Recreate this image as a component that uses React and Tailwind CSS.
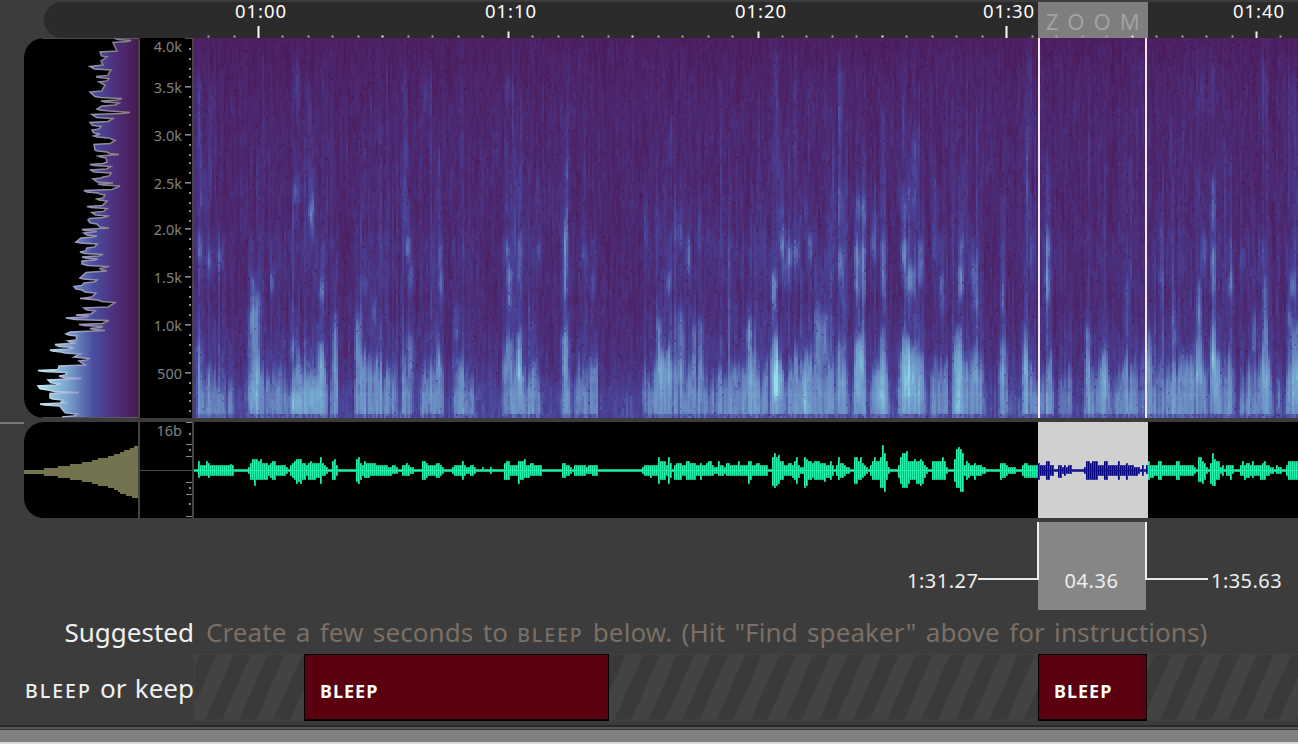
import React, { useEffect, useRef } from 'react';

/* ---------- waveform data: start x, extent above axis, extent below axis ---------- */
const WAVE = `194 1 1;198 9 7;200 5 5;206 9 5;208 7 7;210 5 5;230 6 5;232 5 5;234 1 1;248 3 3;250 7 9;252 11 9;254 11 15;256 11 9;258 9 9;260 11 9;262 7 9;268 5 5;270 7 7;272 9 9;276 5 5;286 3 3;288 1 1;
290 5 5;292 7 7;294 9 9;296 11 13;298 11 11;300 11 13;302 7 9;306 5 5;308 7 9;310 9 9;312 7 9;316 7 7;318 7 7;320 13 13;322 7 5;324 5 5;326 3 3;328 1 1;332 9 9;334 11 9;336 5 5;338 1 1;356 11 11;358 13 13;360 7 9;362 5 5;364 9 7;366 7 7;370 7 5;376 5 5;388 3 5;392 5 3;396 3 3;398 1 1;402 5 5;406 7 5;408 5 5;410 3 3;414 1 1;422 9 9;426 7 7;428 5 5;436 7 7;440 5 5;442 3 3;444 1 1;
452 3 3;454 5 5;462 9 9;464 5 5;466 3 3;470 5 5;474 3 3;476 1 1;482 3 1;484 1 1;490 3 3;492 1 1;504 7 9;506 9 9;510 5 5;518 9 13;520 9 9;524 11 7;526 5 7;530 7 5;534 5 5;542 1 1;562 7 7;566 5 5;570 3 3;572 1 1;574 5 5;586 3 3;588 5 3;592 5 5;598 1 1;642 3 3;644 5 5;650 5 7;652 5 5;658 13 13;660 9 9;666 5 5;668 13 13;670 7 7;672 1 1;674 5 9;676 7 9;682 5 5;686 9 9;690 7 9;696 5 5;700 7 9;702 5 5;706 7 5;708 9 5;712 5 5;714 3 3;
718 9 5;720 5 5;724 3 3;726 7 5;730 5 5;738 9 5;740 5 5;748 9 13;750 9 9;752 5 5;756 7 5;760 5 5;768 1 1;772 13 15;774 17 17;776 13 15;778 15 13;780 9 9;784 5 5;788 7 5;792 5 7;794 9 9;796 13 13;798 5 7;800 3 3;804 13 17;806 11 15;808 9 9;812 7 7;814 9 9;820 7 9;824 7 11;826 5 7;830 9 9;832 5 5;834 1 1;836 5 5;838 13 9;840 7 7;844 5 5;846 3 3;850 1 1;854 13 13;858 9 9;860 13 9;862 7 7;864 5 5;866 3 3;868 1 1;870 5 5;872 9 9;874 13 9;876 9 9;880 13 17;882 25 17;884 17 21;886 9 9;888 3 3;890 1 1;
898 5 7;900 13 13;902 17 17;906 19 17;908 9 13;910 9 9;914 11 9;916 9 13;920 11 15;922 9 13;924 5 7;926 3 3;928 1 1;932 9 9;942 13 9;944 9 9;946 3 3;948 1 1;954 11 11;956 21 17;958 23 17;960 21 21;962 17 21;964 5 5;966 9 9;968 7 7;970 5 5;974 7 9;976 5 5;982 3 3;986 1 1;1000 7 9;1002 7 7;1006 5 5;1008 3 3;1016 1 1;1022 5 5;1024 7 7;1028 5 7;1038 7 9;1040 5 5;1046 9 9;1050 5 5;1054 1 1;1058 5 7;1062 3 3;1064 5 5;1066 3 3;1068 5 3;1072 1 1;1084 3 3;1086 9 9;1090 7 9;1092 9 9;1098 5 5;1104 9 9;1108 5 5;1118 9 9;1120 5 5;1126 7 9;1128 5 5;1134 3 5;1138 3 3;1140 1 1;1142 5 5;1144 1 1;1146 5 3;
1148 9 9;1150 5 7;1154 5 5;1158 9 9;1162 5 5;1176 9 9;1180 5 5;1194 3 3;1196 1 1;1198 13 11;1202 9 13;1204 7 9;1206 3 3;1208 1 1;1210 7 13;1212 17 15;1214 11 15;1216 9 9;1220 3 3;1222 5 5;1224 1 1;1226 5 5;1230 5 9;1232 5 3;1234 1 1;1240 5 5;1242 9 5;1244 5 9;1246 7 7;1250 5 5;1252 9 7;1254 5 5;1260 5 9;1262 7 9;1264 9 9;1266 5 5;1270 3 3;1274 1 1;1276 5 3;1278 3 3;1282 1 1;1286 5 5;1288 9 9`
  .split(';').map((s) => s.trim().split(' ').map(Number));

function waveColumns() {
  const out = [];
  let k = 0;
  for (let x = 194; x < 1298; x += 2) {
    while (k + 1 < WAVE.length && WAVE[k + 1][0] <= x) k++;
    out.push({ x, u: WAVE[k][1], d: WAVE[k][2] });
  }
  return out;
}
const COLUMNS = waveColumns();

/* ---------- spectrogram: x, top, bottom, half width, strength ---------- */
const STREAKS = `199 225 265 2 .25;209 245 275 2 .28;220 245 270 2 .15;198 330 370 3 .2;253 270 330 2 .24;254 305 412 4 .3;258 290 315 3 .18;272 270 295 1.5 .28;310 200 225 2 .22;293 333 360 2 .22;322 275 305 2 .36;321 335 380 2.5 .3;335 310 380 2 .3;358 310 370 2 .36;365 275 292 1.5 .25;374 290 325 2 .22;408 232 262 1.5 .32;411 262 297 1.5 .28;410 330 375 3 .26;440 240 270 1.2 .2;441 265 300 2 .3;439 340 380 2 .32;457 300 345 2 .2;507 235 262 1.5 .28;509 260 310 1.5 .4;508 332 380 3 .36;519 230 290 1.5 .25;519 328 385 1.5 .42;565 228 300 1.5 .32;565 325 380 2 .42;584 240 265 2 .14;539 235 262 1.5 .2;
595 345 385 2 .22;593 265 302 1.5 .2;659 315 380 1.5 .3;662 350 395 1.5 .28;669 265 300 1.5 .32;669 340 390 2 .32;680 305 385 4 .24;681 225 250 3 .16;688 235 275 1.5 .3;694 320 380 1.5 .25;701 315 380 1.5 .26;749 315 350 1.5 .4;750 345 400 3 .2;774 270 308 1.8 .42;775 330 400 2 .4;779 360 400 3 .3;782 225 260 2 .28;785 255 292 2 .22;790 240 268 1.5 .28;796 238 266 1.5 .35;805 190 225 1.5 .2;810 225 265 1.5 .22;818 298 370 1.8 .3;824 305 365 3 .28;805 370 418 1.5 .3;841 245 280 2 .34;843 275 310 2 .18;841 340 395 3 .3;857 240 300 1.5 .34;863 240 300 1.5 .28;857 332 400 2 .3;862 332 375 2 .34;874 222 265 2 .26;883 230 300 1.5 .3;883 325 420 2 .3;878 365 410 4 .2;
904 238 270 2.5 .34;910 260 300 2.5 .34;914 262 302 1.5 .2;921 235 290 1.5 .25;908 336 400 6 .34;921 350 400 3 .24;942 268 315 2.5 .25;961 235 262 1.5 .25;961 260 302 1.8 .45;959 320 418 3 .34;973 255 285 2 .24;976 275 315 2.5 .26;975 340 385 4 .22;1002 285 320 1.5 .25;1003 335 385 3 .28;1025 320 380 1.5 .22;1047 262 305 1.5 .3;1048 232 262 2 .22;1031 235 270 1.5 .16;1087 320 390 2 .26;1127 275 340 1.5 .2;1105 340 400 2 .2;1149 325 380 2 .28;1161 265 380 1.5 .14;1161 210 290 1.5 .15;1174 305 350 2 .15;1199 275 330 1.5 .36;1199 330 390 3 .32;1204 230 270 1.5 .25;1213 240 300 1.5 .36;1213 320 370 1.5 .45;1216 345 400 3 .22;1231 265 300 1.5 .32;1243 245 270 1.5 .18;1265 275 350 1.5 .32;1265 340 395 2.5 .26;1263 235 270 1.5 .14;1254 305 360 1.5 .2;1293 270 300 2.5 .3;1289 300 330 1.5 .2;1296 320 400 4 .3;
199 70 215 2 .16;205 165 215 2 .12;211 80 200 1.5 .1;297 60 110 2 .2;297 175 205 3 .3;310 80 200 2 .12;312 190 240 1.5 .22;405 60 110 1.5 .18;406 130 230 1.5 .18;426 80 110 2 .12;438 150 240 1.5 .14;508 70 105 2 .18;507 130 220 1.5 .14;518 150 220 1.5 .12;539 170 220 1.5 .12;566 150 240 1.5 .18;646 195 250 1.5 .16;660 200 240 2 .16;678 205 240 3 .16;700 210 250 1.5 .15;710 225 245 2 .12;776 45 170 2.5 .16;781 160 230 4 .14;795 70 190 1.5 .1;841 60 150 2 .15;841 180 230 3 .18;858 190 225 3 .22;865 190 230 2 .18;876 205 230 2 .16;883 100 220 2 .12;904 60 160 1.5 .12;905 175 220 4 .2;914 130 225 2 .18;935 170 265 2 .18;962 150 240 2 .14;1003 190 300 1.5 .12;1029 50 240 1.5 .12;1140 50 80 1 .15;1201 70 110 3 .12;1213 55 110 1.5 .19;1213 170 235 1.5 .26;1199 90 125 1.5 .12;1199 160 220 2 .12;1263 55 115 1 .2;1290 70 220 2 .08;1295 70 220 2 .08;313 374 415 8 .22;297 390 415 6 .26`
  .split(';').map((s) => s.trim().split(' ').map(Number));

const STOPS = [
  [0, 72, 22, 78],
  [0.14, 76, 31, 96],
  [0.27, 75, 44, 118],
  [0.45, 73, 68, 154],
  [0.7, 103, 132, 190],
  [0.88, 120, 174, 210],
  [1, 148, 222, 234],
];

function colour(v) {
  const t = Math.max(0, Math.min(1, v));
  let i = 1;
  while (i < STOPS.length - 1 && STOPS[i][0] < t) i++;
  const a = STOPS[i - 1];
  const b = STOPS[i];
  const f = (t - a[0]) / (b[0] - a[0]);
  return [1, 2, 3].map((c) => a[c] + (b[c] - a[c]) * f);
}

function generator(seed) {
  let s = seed;
  return () => {
    s = (s + 0x6d2b79f5) | 0;
    let t = Math.imul(s ^ (s >>> 15), 1 | s);
    t = (t + Math.imul(t ^ (t >>> 7), 61 | t)) ^ t;
    return ((t ^ (t >>> 14)) >>> 0) / 4294967296;
  };
}

const smooth = (a, b, v) => {
  const t = Math.max(0, Math.min(1, (v - a) / (b - a)));
  return t * t * (3 - 2 * t);
};

const FLOOR = [[38, 0.15], [110, 0.22], [200, 0.23], [270, 0.23], [320, 0.25], [350, 0.28], [375, 0.33], [395, 0.42], [412, 0.44], [418, 0.42]];
function floorLevel(y) {
  for (let i = 1; i < FLOOR.length; i++) {
    if (y <= FLOOR[i][0]) {
      const [y0, a] = FLOOR[i - 1];
      const [y1, b] = FLOOR[i];
      return a + ((b - a) * (y - y0)) / (y1 - y0);
    }
  }
  return 0.42;
}

function paintSpectrogram(canvas) {
  const w = 552;
  const h = 190;
  const ctx = canvas.getContext('2d');
  const img = ctx.createImageData(w, h);
  const rnd = generator(71);
  let drift = 0;
  for (let i = 0; i < w; i++) {
    const x = 194 + i * 2;
    const amp = COLUMNS[i].u + COLUMNS[i].d;
    const near = COLUMNS[Math.max(0, i - 1)].u + COLUMNS[Math.min(w - 1, i + 1)].u;
    const a = (amp + near) / 2;
    const voiced = smooth(2, 10, a);
    const loud = smooth(10, 34, a);
    drift = drift * 0.6 + (rnd() - 0.5) * 0.8;
    const top = 368 - loud * 24 + drift * 28;
    const tone = (rnd() - 0.5) * 0.08 - drift * 0.07;
    const haze = rnd() * rnd() * 0.15 * (0.25 + voiced);
    const hazeTop = 50 + rnd() * 180;
    const mine = STREAKS.filter((s) => Math.abs(s[0] - x) < s[3] * 4 + 2);
    let n1 = 0;
    let n2 = 0;
    for (let j = 0; j < h; j++) {
      const y = 38 + j * 2;
      if (rnd() < 0.24) n1 = (rnd() - 0.5) * 0.1;
      n2 = n2 * 0.95 + (rnd() - 0.5) * 0.03;
      let v = floorLevel(y) + n1 + n2 + tone * 0.3;
      if (rnd() < 0.008) v -= 0.12;
      v += haze * smooth(hazeTop - 30, hazeTop + 40, y);
      v += voiced * 0.06 * smooth(280, 350, y);
      v += voiced * 0.05 * smooth(220, 245, y) * (1 - smooth(270, 300, y));
      const low = 1 - smooth(411, 415, y);
      const body = smooth(top - 16, top + 22, y) * (0.22 + 0.78 * low);
      const dip = 1 - 0.2 * smooth(378, 386, y) * (1 - smooth(388, 396, y));
      v += voiced * body * dip * (0.23 + loud * 0.05 + tone * 1.6) * (y > 395 ? 0.86 : 1);
      for (const s of mine) {
        const dx = (x + 1 - s[0]) / (s[3] + 0.5);
        const fall = Math.exp(-dx * dx * 0.65);
        const edge = Math.min(16, (s[2] - s[1]) / 2);
        v += s[4] * 0.75 * fall * smooth(s[1] - 6, s[1] + edge, y) * (1 - smooth(s[2] - edge, s[2] + 6, y));
        v += s[4] * 0.25 * fall * smooth(s[1] - 50, s[1], y) * (1 - smooth(s[2], s[2] + 40, y));
      }
      if (y > 412) v = Math.min(v, 0.56 + n1 * 2);
      if (v > 0.7) v = 0.7 + (v - 0.7) * 0.56;
      const c = colour(v);
      const p = (j * w + i) * 4;
      img.data[p] = c[0];
      img.data[p + 1] = c[1];
      img.data[p + 2] = c[2];
      img.data[p + 3] = 255;
    }
  }
  ctx.putImageData(img, 0, 0);
}

function Spectrogram() {
  const ref = useRef(null);
  useEffect(() => paintSpectrogram(ref.current), []);
  return <canvas ref={ref} width={552} height={190} className="block h-[380px] w-[1104px] [image-rendering:pixelated]" />;
}

/* ---------- average spectrum outline ---------- */
const PROFILE = `114,38 131,40.5 113,42.5 117,51 100,52 107,57 101,61 103,65 90,66.5 111,70 109,78.5 96,76.5 99,82 105,85 90,92 95,96.5 122,98.5 101,101 119,103 102,106 97,109 110,111 130,112.5 92,114.5 113,118.5 90,122.5 101,126.5 92,130 100,134 94,136 109,138 115,140.5 94,144.5 95,150 107,152 98,156 119,154.5 106,158 107,162 90,164.5 111,166.5 90,170 111,173 103,177 93,179 113,183 98,184 120,186 84,190.5 98,193 105,195 97,199 107,201 87,206.5 107,208.5 92,212.5 108,216 90,218.5 107,216.5 88,220 97,224 109,228 82,229.5 97,231.5 84,233 97,236 81,238 76,242 97,244 87,248 80,252 103,254.5 82,257 98,259 82,261 82,264 108,266.5 100,268.5 107,271 86,272.5 80,278 97,280 84,283 74,286.5 82,290 96,293 92,297 80,298.5 98,300 115,302.5 84,308 95,311 76,315 89,316 66,318 109,320.5 79,324.5 103,326.5 90,328.5 105,330.5 70,332 66,334 77,336 76,340 68,341 76,343 55,344.5 74,347.5 50,350 61,352 80,354 74,357 89,358.5 79,361 85,365 59,366 58,369.5 38,370.5 67,372.5 59,376 81,378.5 48,380 61,384 38,386 48,390 79,392.5 50,393.5 50,398 63,400 61,402 67,402.8 40,404 60,406 62,409 77,414 62,417`
  .split(' ').map((p) => p.split(',').map(Number)).sort((a, b) => a[1] - b[1]);

function outline(points) {
  const out = [points[0]];
  for (let i = 1; i < points.length; i++) {
    const [x0, y0] = points[i - 1];
    const [x1, y1] = points[i];
    if (Math.abs(x1 - x0) > 6 && y1 - y0 > 1.5) {
      out.push([x0 + (x1 - x0) * 0.22, Math.max(y0 + 0.6, y1 - 1.1)]);
    }
    out.push([x1, y1]);
  }
  return out;
}
const PROFILE_POINTS = outline(PROFILE).map(([x, y]) => `${x - 24},${(y - 38).toFixed(1)}`).join(' ');

function AverageSpectrum() {
  return (
    <svg className="block" width="114" height="380" viewBox="0 0 114 380">
      <defs>
        <linearGradient id="spectrumFill" gradientUnits="userSpaceOnUse" x1="14" y1="0" x2="114" y2="0">
          <stop offset="0" stopColor="#a5e6f0" />
          <stop offset=".3" stopColor="#76a3cc" />
          <stop offset=".55" stopColor="#4a4ea0" />
          <stop offset=".78" stopColor="#4d2d7a" />
          <stop offset="1" stopColor="#481a50" />
        </linearGradient>
        <linearGradient id="spectrumLine" gradientUnits="userSpaceOnUse" x1="14" y1="0" x2="106" y2="0">
          <stop offset="0" stopColor="#c5f0f5" />
          <stop offset=".45" stopColor="#a09cc8" />
          <stop offset=".8" stopColor="#8a8488" />
        </linearGradient>
      </defs>
      <polygon points={`114,0 ${PROFILE_POINTS} 114,380`} fill="url(#spectrumFill)" />
      <polyline points={PROFILE_POINTS} fill="none" stroke="url(#spectrumLine)" strokeWidth="1.5" />
      <path d="M18 .5H114M18 379.5H114" stroke="#777" strokeOpacity=".6" />
    </svg>
  );
}

const FREQS = [['4.0k', 46], ['3.5k', 87], ['3.0k', 135], ['2.5k', 183], ['2.0k', 229], ['1.5k', 277], ['1.0k', 325], ['500', 373]];
const MAJOR_Y = [86, 134, 182, 228, 276, 324, 372];

function FrequencyScale() {
  const minors = [48, 58, 68, 76];
  MAJOR_Y.forEach((y) => [10, 20, 28, 38].forEach((d) => y + d < 417 && minors.push(y + d)));
  return (
    <div className="relative h-[380px] w-[52px] bg-black font-[Noto_Sans,sans-serif] text-[14.5px] leading-4 text-[#808080]">
      {FREQS.map(([label, y]) => (
        <span key={label} className="absolute right-[10px]" style={{ top: y - 46 }}>{label}</span>
      ))}
      <svg className="absolute right-0 top-0" width="7" height="380" fill="#8a8a8a">
        <rect x="0" y="0" width="7" height="1" opacity=".6" />
        {MAJOR_Y.map((y) => <rect key={y} x="0" y={y - 38} width="6" height="1.6" />)}
        {minors.map((y) => <rect key={y} x="4" y={y - 38} width="2" height="2" />)}
      </svg>
    </div>
  );
}

const LEVELS = [[24, 470, 474], [44, 468, 476], [58, 466, 478], [70, 464, 480], [82, 462, 482], [92, 460, 484], [98, 458, 486], [108, 456, 488], [114, 454, 490], [118, 454, 492], [120, 452, 494], [122, 452, 494], [124, 450, 494], [126, 450, 496], [130, 448, 496], [132, 448, 498], [134, 446, 498], [138, 446, 498]];

function LevelHistogram() {
  return (
    <svg className="block" width="114" height="96" fill="#73734f" shapeRendering="crispEdges">
      {LEVELS.slice(0, -1).map(([x, t, b], i) => (
        <rect key={x} x={x - 24} y={t - 422} width={LEVELS[i + 1][0] - x} height={b - t} />
      ))}
    </svg>
  );
}

function LevelScale() {
  return (
    <div className="relative h-24 w-[52px] bg-black font-[Noto_Sans,sans-serif] text-[14.5px] leading-4 text-[#808080]">
      <span className="absolute right-[10px] top-0">16b</span>
      <svg className="absolute left-0 top-0" width="52" height="96" fill="#8a8a8a" shapeRendering="crispEdges">
        <rect x="0" y="48" width="52" height="1" fill="#4a4a4a" />
        {[0, 22, 34, 60, 72, 94].map((y) => <rect key={y} x="46" y={y} width="6" height="1" />)}
        {[12, 28, 66, 82].map((y) => <rect key={y} x="49" y={y - 1} width="2" height="2" />)}
      </svg>
    </div>
  );
}

function Waveform() {
  return (
    <svg className="block" width="1104" height="96" shapeRendering="crispEdges">
      <rect width="1104" height="96" fill="#000" />
      <rect x="844" width="110" height="96" fill="#d0d0d0" />
      {COLUMNS.map(({ x, u, d }) => {
        const sel = x >= 1038 && x < 1148;
        const left = x - 194;
        return (
          <g key={x}>
            <rect x={left} y={48 - u} width="2" height={u + d + 1} fill={sel ? '#3c3ca0' : '#10b682'} />
            <rect x={left} y={49 - u} width="1" height={Math.max(1, u + d - 1)} fill={sel ? '#00007c' : '#22f2aa'} />
          </g>
        );
      })}
      <rect y="48" width="844" height="1" fill="#22f2aa" />
      <rect x="844" y="48" width="110" height="1" fill="#14148c" />
      <rect x="954" y="48" width="150" height="1" fill="#22f2aa" />
    </svg>
  );
}

const TIMES = [['01:00', 261], ['01:10', 511], ['01:20', 761], ['01:30', 1009], ['01:40', 1259]];

function TimeRuler() {
  const ticks = [];
  for (let k = -2; k < 42; k++) {
    if (k % 10 !== 0) ticks.push([Math.round((258 + k * 24.95) / 2) * 2, k % 5 === 0]);
  }
  return (
    <header className="h-[38px] shrink-0 pl-[44px] pt-[2px]">
      <div className="relative h-9 rounded-l-[20px] bg-[#2b2b2b] font-[Noto_Sans,sans-serif] text-[18.5px] leading-5 tracking-[0.95px] text-white">
        <div className="absolute left-[994px] top-0 h-9 w-[110px] bg-[#7e7e7e]" />
        <span className="absolute left-[1002px] top-[7px] whitespace-nowrap text-[22px] leading-6 tracking-[9px] text-[#a2a2a2]">ZOOM</span>
        {TIMES.map(([t, x]) => (
          <span key={t} className="absolute -top-px -translate-x-1/2" style={{ left: x - 44 }}>{t}</span>
        ))}
        <svg className="absolute left-0 top-0" width="1254" height="36">
          {ticks.map(([x, half]) => <rect key={x} x={x - 44.5} y="33.5" width="2" height="2" fill={half ? '#eee' : '#aaa'} />)}
          {[258, 1006].map((x) => <rect key={x} x={x - 44.5} y="24" width="2" height="12" fill="#fff" />)}
          {[508, 758, 1256].map((x) => <rect key={x} x={x - 44.5} y="29.5" width="2" height="6.5" fill="#eee" />)}
        </svg>
      </div>
    </header>
  );
}

function Bleep({ className }) {
  return (
    <div className={`absolute top-0 flex h-[67px] items-center border border-b-2 border-black bg-[#5a000e] pl-[15px] pt-[9px] font-[Noto_Sans,sans-serif] text-[18px] font-bold tracking-[1px] text-white ${className}`}>
      BLEEP
    </div>
  );
}

function Stripes() {
  return (
    <svg className="block" width="1104" height="67">
      <defs>
        <pattern id="hatch" width="34.1" height="67" patternUnits="userSpaceOnUse" patternTransform="translate(20 0)">
          <rect width="34.1" height="67" fill="#3a3a3a" />
          <path d="M2.5 1H19.5L-9 66H-26ZM36.6 1H53.6L25.1 66H8.1Z" fill="#434343" />
        </pattern>
      </defs>
      <rect y="1" width="1104" height="65" fill="url(#hatch)" />
      <path d="M0 .5H1104M0 66H1104M.5 0V66" stroke="#434343" fill="none" />
    </svg>
  );
}

export default function App() {
  return (
    <div className="relative flex h-[744px] w-[1298px] flex-col overflow-hidden bg-[#3c3c3c] font-[Noto_Sans,sans-serif]">
      <TimeRuler />

      <section className="flex h-[380px] shrink-0 pl-6">
        <div className="w-[114px] overflow-hidden rounded-l-[20px] bg-black"><AverageSpectrum /></div>
        <div className="w-[2px] bg-[#444]" />
        <FrequencyScale />
        <div className="w-[2px] bg-[#444]" />
        <div className="relative">
          <Spectrogram />
          <div className="absolute left-[844px] top-0 h-[380px] w-[109px] border-x-2 border-[#eee8ee]" />
        </div>
      </section>

      <section className="mt-1 flex h-24 shrink-0">
        <div className="h-[2px] w-6 bg-[#777]" />
        <div className="w-[114px] overflow-hidden rounded-l-[20px] bg-black"><LevelHistogram /></div>
        <div className="w-[2px] bg-[#444]" />
        <LevelScale />
        <div className="w-[2px] bg-[#444]" />
        <Waveform />
      </section>

      <section className="mt-1 flex h-[88px] shrink-0 items-start pl-[907px] text-[20px] leading-6 text-[#eee]">
        <span className="mt-[47px] w-[71px] whitespace-nowrap tracking-[0.5px]">1:31.27</span>
        <div className="mt-[56px] h-[2px] w-[60px] bg-[#e8e8e8]" />
        <div className="flex h-[88px] w-[108px] justify-center bg-[#868686] pt-[47px]">
          <span className="-ml-px tracking-[0.6px]">04.36</span>
        </div>
        <div className="mt-[56px] h-[2px] w-[62px] bg-[#e8e8e8]" />
        <span className="ml-[3px] mt-[47px] whitespace-nowrap tracking-[0.45px]">1:35.63</span>
      </section>
      <div className="absolute left-[1037px] top-[522px] h-[58px] w-[2px] bg-[#eee]" />
      <div className="absolute left-[1145px] top-[522px] h-[58px] w-[2px] bg-[#eee]" />

      <section className="flex h-[44px] shrink-0 items-center text-[26px] leading-8">
        <span className="w-[194px] text-right text-[#f0f0f0]">Suggested</span>
        <span className="ml-3 mt-[2px] whitespace-nowrap tracking-[0.1px] text-[#7b6f65] [word-spacing:2.4px]">
          Create a few seconds to <span className="text-[19.5px] font-medium tracking-[1.9px]">BLEEP</span> below. (Hit "Find speaker" above for instructions)
        </span>
      </section>

      <section className="flex h-[67px] shrink-0">
        <div className="w-[194px] whitespace-nowrap pt-[18px] text-right text-[26px] leading-8 text-[#f0f0f0] [word-spacing:1.5px]">
          <span className="text-[19.5px] font-medium tracking-[2px]">BLEEP</span> or keep
        </div>
        <div className="relative">
          <Stripes />
          <Bleep className="left-[110px] w-[305px]" />
          <Bleep className="left-[844px] w-[109px]" />
        </div>
      </section>

      <footer className="mt-1 flex flex-col">
        <div className="h-[2px] bg-[#292929]" />
        <div className="h-[2px] bg-[#555]" />
        <div className="h-px bg-[#383838]" />
        <div className="h-3 bg-[#808080]" />
        <div className="h-[2px] bg-[#d9dcd9]" />
      </footer>
    </div>
  );
}
